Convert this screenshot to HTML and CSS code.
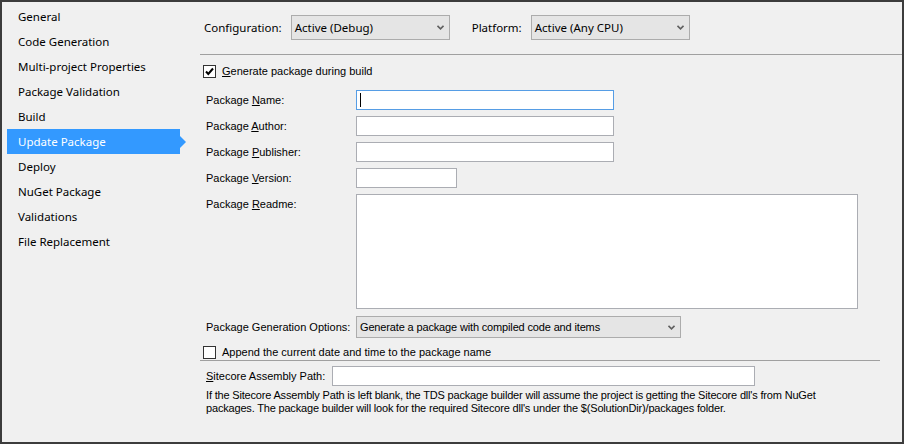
FILE: index.html
```html
<!DOCTYPE html>
<html>
<head>
<meta charset="utf-8">
<link rel="stylesheet" href="styles.css">
</head>
<body>
<div class="frame">
  <nav class="sidebar">
    <div class="nav-item">General</div>
    <div class="nav-item">Code Generation</div>
    <div class="nav-item">Multi-project Properties</div>
    <div class="nav-item">Package Validation</div>
    <div class="nav-item">Build</div>
    <div class="nav-item active">Update Package</div>
    <div class="nav-item">Deploy</div>
    <div class="nav-item">NuGet Package</div>
    <div class="nav-item">Validations</div>
    <div class="nav-item">File Replacement</div>
  </nav>
  <main class="main">
    <div class="topbar">
      <span class="top-label">Configuration:</span>
      <div class="combo combo-top"><span>Active (Debug)</span><svg class="chev" width="7" height="5" viewBox="0 0 7 5"><path d="M0.5 0.8 L3.5 3.8 L6.5 0.8" fill="none" stroke="#606060" stroke-width="1.6"/></svg></div>
      <span class="top-label platform">Platform:</span>
      <div class="combo combo-top"><span>Active (Any CPU)</span><svg class="chev" width="7" height="5" viewBox="0 0 7 5"><path d="M0.5 0.8 L3.5 3.8 L6.5 0.8" fill="none" stroke="#606060" stroke-width="1.6"/></svg></div>
    </div>
    <div class="sep sep-full"></div>
    <div class="form">
      <label class="check-row gen">
        <span class="box"><svg width="11" height="11" viewBox="0 0 11 11"><path d="M2 5.5 L4.3 8 L9 2.5" fill="none" stroke="#000" stroke-width="2"/></svg></span>
        <span><u>G</u>enerate package during build</span>
      </label>
      <div class="grid">
        <span class="lbl">Package <u>N</u>ame:</span>
        <div class="input wide focused"><span class="caret"></span></div>
        <span class="lbl">Package <u>A</u>uthor:</span>
        <div class="input wide"></div>
        <span class="lbl">Package <u>P</u>ublisher:</span>
        <div class="input wide"></div>
        <span class="lbl">Package <u>V</u>ersion:</span>
        <div class="input short"></div>
        <span class="lbl lbl-top">Package <u>R</u>eadme:</span>
        <div class="input area"></div>
        <span class="lbl">Package Generation Options:</span>
        <div class="combo combo-opt"><span>Generate a package with compiled code and items</span><svg class="chev" width="7" height="5" viewBox="0 0 7 5"><path d="M0.5 0.8 L3.5 3.8 L6.5 0.8" fill="none" stroke="#606060" stroke-width="1.6"/></svg></div>
      </div>
      <label class="check-row append">
        <span class="box"></span>
        <span>Append the current date and time to the package name</span>
      </label>
    </div>
    <div class="sep sep-part"></div>
    <div class="sitecore">
      <div class="sc-row">
        <span class="lbl sc-lbl"><u>S</u>itecore Assembly Path:</span>
        <div class="input sc-input"></div>
      </div>
      <p class="help">If the Sitecore Assembly Path is left blank, the TDS package builder will assume the project is getting the Sitecore dll's from NuGet<br>packages. The package builder will look for the required Sitecore dll's under the $(SolutionDir)/packages folder.</p>
    </div>
  </main>
</div>
</body>
</html>
```
FILE: styles.css
```css
html, body {
  margin: 0;
  padding: 0;
}
body {
  width: 904px;
  height: 444px;
  overflow: hidden;
  background: #f0f0f0;
}
.frame {
  box-sizing: border-box;
  width: 904px;
  height: 444px;
  border: 2px solid #3c3c3c;
  background: #f0f0f0;
  display: flex;
}
.sidebar {
  width: 198px;
  flex: none;
  padding: 2px 0 0 5px;
  box-sizing: border-box;
  font-family: "Noto Sans", "Open Sans", sans-serif;
  font-size: 11.5px;
  color: #000;
}
.nav-item {
  position: relative;
  width: 173px;
  height: 25px;
  line-height: 25px;
  padding-left: 11px;
  box-sizing: border-box;
  white-space: nowrap;
}
.nav-item.active {
  background: #3399ff;
  color: #fff;
}
.nav-item.active::after {
  content: "";
  position: absolute;
  right: -6px;
  top: 7px;
  border-left: 6px solid #3399ff;
  border-top: 6px solid transparent;
  border-bottom: 6px solid transparent;
}
.main {
  flex: 1;
  display: flex;
  flex-direction: column;
  font-family: "Liberation Sans", Arial, sans-serif;
  font-size: 11px;
  color: #000;
}
.topbar {
  display: flex;
  align-items: center;
  padding: 13px 0 0 4px;
  height: 24px;
  font-family: "Noto Sans", "Open Sans", sans-serif;
  font-size: 11.5px;
}
.top-label {
  margin-right: 9px;
}
.top-label.platform {
  margin-left: 22px;
  margin-right: 9px;
}
.combo {
  box-sizing: border-box;
  border: 1px solid #acacac;
  background: #e5e5e5;
  display: flex;
  align-items: center;
  justify-content: space-between;
  padding: 0 5px 0 3px;
  white-space: nowrap;
}
.combo-top {
  width: 159px;
  height: 25px;
}
.chev {
  flex: none;
}
.sep {
  height: 1px;
  background: #a0a0a0;
}
.sep-full {
  margin-top: 15px;
}
.form {
  padding: 9px 0 0 3px;
}
.check-row {
  display: flex;
  align-items: center;
  height: 14px;
}
.box {
  box-sizing: border-box;
  width: 13px;
  height: 13px;
  border: 1px solid #333;
  background: #fff;
  margin-right: 6px;
  display: flex;
  align-items: center;
  justify-content: center;
  flex: none;
}
.grid {
  display: grid;
  grid-template-columns: 150px auto;
  row-gap: 6px;
  padding: 12px 0 0 3px;
  align-items: center;
  justify-items: start;
}
.lbl {
  white-space: nowrap;
}
.lbl-top {
  align-self: start;
  padding-top: 4px;
}
.input {
  box-sizing: border-box;
  border: 1px solid #abadb3;
  background: #fff;
  height: 20px;
  position: relative;
}
.input.focused {
  border-color: #569de5;
}
.caret {
  position: absolute;
  left: 3px;
  top: 2px;
  width: 1px;
  height: 14px;
  background: #000;
}
.wide {
  width: 258px;
}
.short {
  width: 101px;
}
.area {
  width: 502px;
  height: 115px;
}
.combo-opt {
  width: 325px;
  height: 22px;
  margin-top: 1px;
  font-size: 11px;
  letter-spacing: -0.15px;
}
.append {
  margin-top: 7px;
}
.sep-part {
  margin-top: 1px;
  width: 680px;
}
.sitecore {
  padding: 5px 0 0 6px;
}
.sc-row {
  display: flex;
  align-items: center;
}
.sc-lbl {
  width: 126px;
}
.sc-input {
  width: 423px;
}
.help {
  margin: 3px 0 0 0;
  line-height: 13px;
  white-space: nowrap;
  letter-spacing: -0.18px;
}
```
